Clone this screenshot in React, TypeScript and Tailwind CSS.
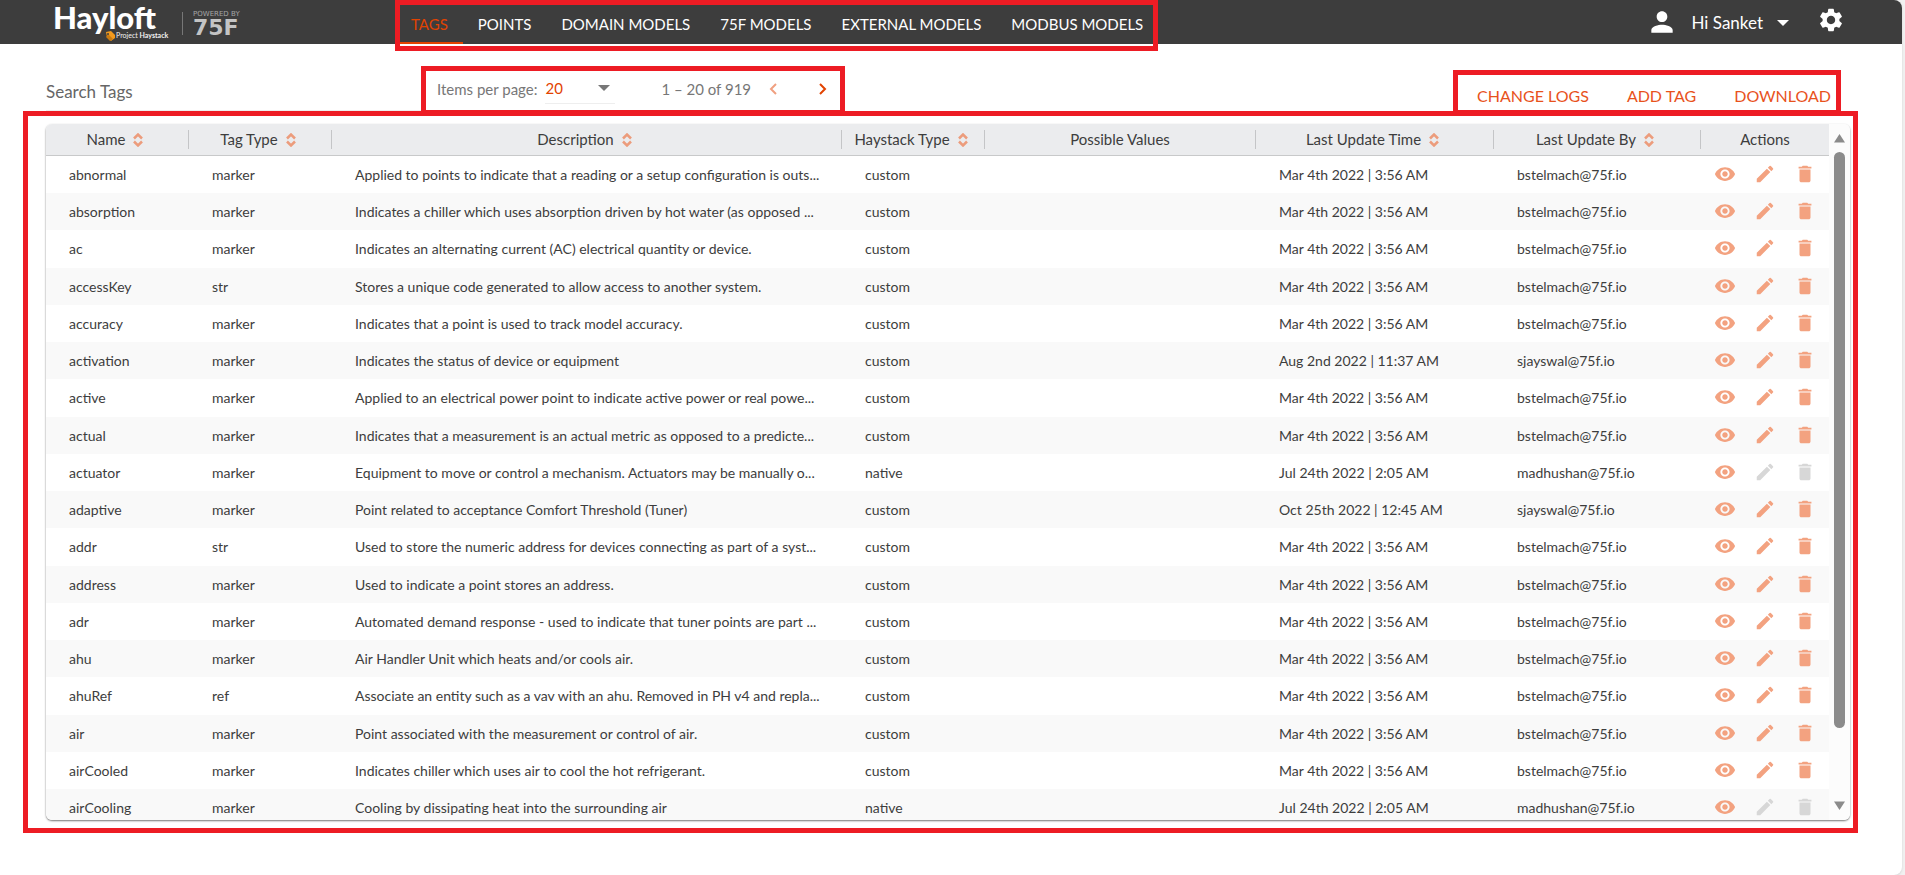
import { FC, ReactNode } from "react";
import { MdDelete, MdEdit, MdPerson, MdSettings, MdVisibility } from "react-icons/md";

interface Tag {
  name: string;
  type: string;
  description: string;
  haystackType: string;
  updatedAt: string;
  updatedBy: string;
}

const MAR = "Mar 4th 2022 | 3:56 AM";
const JUL = "Jul 24th 2022 | 2:05 AM";

const row = (
  name: string,
  type: string,
  description: string,
  haystackType = "custom",
  updatedAt = MAR,
  updatedBy = "bstelmach@75f.io"
): Tag => ({ name, type, description, haystackType, updatedAt, updatedBy });

const tags: Tag[] = [
  row("abnormal", "marker", "Applied to points to indicate that a reading or a setup configuration is outs..."),
  row("absorption", "marker", "Indicates a chiller which uses absorption driven by hot water (as opposed ..."),
  row("ac", "marker", "Indicates an alternating current (AC) electrical quantity or device."),
  row("accessKey", "str", "Stores a unique code generated to allow access to another system."),
  row("accuracy", "marker", "Indicates that a point is used to track model accuracy."),
  row("activation", "marker", "Indicates the status of device or equipment", "custom", "Aug 2nd 2022 | 11:37 AM", "sjayswal@75f.io"),
  row("active", "marker", "Applied to an electrical power point to indicate active power or real powe..."),
  row("actual", "marker", "Indicates that a measurement is an actual metric as opposed to a predicte..."),
  row("actuator", "marker", "Equipment to move or control a mechanism. Actuators may be manually o...", "native", JUL, "madhushan@75f.io"),
  row("adaptive", "marker", "Point related to acceptance Comfort Threshold (Tuner)", "custom", "Oct 25th 2022 | 12:45 AM", "sjayswal@75f.io"),
  row("addr", "str", "Used to store the numeric address for devices connecting as part of a syst..."),
  row("address", "marker", "Used to indicate a point stores an address."),
  row("adr", "marker", "Automated demand response - used to indicate that tuner points are part ..."),
  row("ahu", "marker", "Air Handler Unit which heats and/or cools air."),
  row("ahuRef", "ref", "Associate an entity such as a vav with an ahu. Removed in PH v4 and repla..."),
  row("air", "marker", "Point associated with the measurement or control of air."),
  row("airCooled", "marker", "Indicates chiller which uses air to cool the hot refrigerant."),
  row("airCooling", "marker", "Cooling by dissipating heat into the surrounding air", "native", JUL, "madhushan@75f.io"),
];

const columns = [
  { label: "Name", width: "w-[143px]", sortable: true },
  { label: "Tag Type", width: "w-[143px]", sortable: true },
  { label: "Description", width: "", sortable: true },
  { label: "Haystack Type", width: "w-[143px]", sortable: true },
  { label: "Possible Values", width: "w-[271px]", sortable: false },
  { label: "Last Update Time", width: "w-[238px]", sortable: true },
  { label: "Last Update By", width: "w-[207px]", sortable: true },
  { label: "Actions", width: "w-[128px]", sortable: false },
];

const tabs = ["TAGS", "POINTS", "DOMAIN MODELS", "75F MODELS", "EXTERNAL MODELS", "MODBUS MODELS"];

// red frame laid over a section of the page
const Frame: FC<{ className: string }> = ({ className }) => (
  <div className={`pointer-events-none absolute z-10 border-5 border-[#ed1c24] ${className}`} />
);

const Logo: FC = () => (
  <svg width="200" height="44" viewBox="46 0 200 44" role="img" aria-label="Hayloft">
    <text x="53" y="29" fill="#fff" fontFamily="Lato" fontWeight="900" fontSize="31">
      Hayloft
    </text>
    <path d="M106 32l5-1 4 4v3l-4 3-4-4z" fill="#f39a1d" />
    <path d="M108 34l5 5-3 2-4-4z" fill="#c97a10" />
    <circle cx="108" cy="34" r="1" fill="#3d3d3d" />
    <text x="116" y="38" fill="#f2f2f2" fontFamily="Lato" fontSize="7">
      Project <tspan fontWeight="700">Haystack</tspan>
    </text>
    <path d="M182.500 12v23" stroke="#777" />
    <text x="193" y="16" fill="#a5a5a5" fontFamily="DejaVu Sans" fontSize="7">
      POWERED BY
    </text>
    <text x="193" y="35" fill="#c4c4c4" fontFamily="DejaVu Sans" fontWeight="700" fontSize="22">
      75F
    </text>
  </svg>
);

const SortIcon: FC = () => (
  <svg width="10" height="14" viewBox="0 0 10 14" fill="none" stroke="#ec9c7c" strokeWidth="2.500">
    <path d="M1 5.500l4-4 4 4M1 8.500l4 4 4-4" />
  </svg>
);

const Caret: FC<{ className: string }> = ({ className }) => (
  <svg width="12" height="6" viewBox="0 0 12 6" fill="currentColor" className={className}>
    <path d="M0 0h12L6 6z" />
  </svg>
);

const IconButton: FC<{ label: string; disabled?: boolean; children: ReactNode }> = ({
  label,
  disabled,
  children,
}) => (
  <button aria-label={label} disabled={disabled} className="block text-[#f3a280] disabled:text-[#d7d7d7]">
    {children}
  </button>
);

const Header: FC = () => (
  <header className="flex h-11 items-center bg-[#3d3d3d] pl-[46px] text-white">
    <Logo />
    <nav className="relative ml-[150px] flex h-full">
      {tabs.map((tab, i) => (
        <a
          key={tab}
          href="#"
          className={`flex items-center whitespace-nowrap border-b-2 px-[15px] pt-[6px] text-[15px] leading-5 ${
            i === 0 ? "border-[#e24301] text-[#e24301]" : "border-transparent"
          }`}
        >
          {tab}
        </a>
      ))}
      <Frame className="-bottom-[7px] -left-px right-0 top-0" />
    </nav>
    <div className="ml-auto flex items-center pr-[57px]">
      <MdPerson size={32} />
      <button className="ml-[14px] flex items-center gap-[14px] pt-[2px] text-[17px] leading-6">
        Hi Sanket
        <Caret className="text-white" />
      </button>
      <button aria-label="Settings" className="ml-7 pb-1">
        <MdSettings size={28} />
      </button>
    </div>
  </header>
);

const Toolbar: FC = () => (
  <div className="flex h-[67px] items-end">
    <input
      aria-label="Search Tags"
      placeholder="Search Tags"
      className="h-10 w-[375px] border-b border-[#eee] pt-[2px] text-[17px] text-[#666] outline-none placeholder:text-[#666]"
    />
    <div className="relative flex h-11 w-[424px] items-center whitespace-nowrap pl-4 text-[15px] text-[#777]">
      <label htmlFor="size">Items per page:</label>
      <div className="relative ml-2">
        <select
          id="size"
          defaultValue="20"
          className="h-[30px] w-[70px] appearance-none border-b border-[#eee] text-[#e24301] outline-none"
        >
          <option>20</option>
          <option>50</option>
        </select>
        <Caret className="pointer-events-none absolute right-[5px] top-[11px] text-[#777]" />
      </div>
      <span className="ml-[46px]">1 – 20 of 919</span>
      <button aria-label="Previous page" className="ml-[18px] text-[#f0a080]">
        <svg width="8" height="12" viewBox="0 0 8 12" fill="none" stroke="currentColor" strokeWidth="2">
          <path d="M7 1L2 6l5 5" />
        </svg>
      </button>
      <button aria-label="Next page" className="ml-[42px] text-[#e24301]">
        <svg width="8" height="12" viewBox="0 0 8 12" fill="none" stroke="currentColor" strokeWidth="2">
          <path d="M1 1l5 5-5 5" />
        </svg>
      </button>
      <Frame className="-bottom-1 -top-px left-0 right-0" />
    </div>
    <div className="relative ml-auto mr-[9px] flex h-10 items-center gap-[38px] whitespace-nowrap pl-6 pr-[10px] pt-[10px] text-base text-[#e8521c]">
      <button>CHANGE LOGS</button>
      <button>ADD TAG</button>
      <button>DOWNLOAD</button>
      <Frame className="-bottom-1 -top-px left-0 right-0" />
    </div>
  </div>
);

const TagTable: FC = () => (
  <table className="w-full table-fixed border-separate border-spacing-0 text-left">
    <thead>
      <tr className="bg-[#ebecee]">
        {columns.map((col, i) => (
          <th key={col.label} className={`h-8 border-b border-[#c8c9ca] p-0 font-normal ${col.width}`}>
            <div
              className={`flex h-[19px] items-center justify-center gap-2 whitespace-nowrap text-[15px] ${
                i < columns.length - 1 ? "border-r border-[#c4c5c7]" : ""
              } ${col.sortable ? "pr-1" : ""}`}
            >
              {col.label}
              {col.sortable && <SortIcon />}
            </div>
          </th>
        ))}
      </tr>
    </thead>
    <tbody>
      {tags.map((tag) => {
        const locked = tag.haystackType === "native";
        return (
          <tr key={tag.name} className="h-[37px] text-sm even:bg-[#f9f9f9] nth-[4n+3]:h-[38px]">
            <td className="py-0 pl-[23px]">{tag.name}</td>
            <td className="py-0 pl-[23px]">{tag.type}</td>
            <td className="truncate py-0 pl-[23px]">{tag.description}</td>
            <td className="py-0 pl-[23px]">{tag.haystackType}</td>
            <td />
            <td className="py-0 pl-[23px]">{tag.updatedAt}</td>
            <td className="py-0 pl-[23px]">{tag.updatedBy}</td>
            <td className="py-0 pl-[13px]">
              <div className="flex gap-[18px] pb-[2px]">
                <IconButton label={`View ${tag.name}`}>
                  <MdVisibility size={22} />
                </IconButton>
                <IconButton label={`Edit ${tag.name}`} disabled={locked}>
                  <MdEdit size={22} />
                </IconButton>
                <IconButton label={`Delete ${tag.name}`} disabled={locked}>
                  <MdDelete size={22} />
                </IconButton>
              </div>
            </td>
          </tr>
        );
      })}
    </tbody>
  </table>
);

const ScrollBar: FC = () => (
  <div className="flex w-[21px] flex-col items-center bg-[#fcfcfc] py-[10px] text-[#8b8b8b]">
    <svg width="11" height="9" viewBox="0 0 11 9" fill="currentColor">
      <path d="M5.500 0L11 8.500H0z" />
    </svg>
    <div className="my-[9px] w-[11px] flex-1">
      <div className="h-9/10 rounded-full bg-[#8b8b8b]" />
    </div>
    <svg width="11" height="9" viewBox="0 0 11 9" fill="currentColor">
      <path d="M5.500 9L11 .5H0z" />
    </svg>
  </div>
);

const App: FC = () => {
  return (
    <div className="bg-[#f1f1f1] pr-[3px] font-['Lato',sans-serif] text-[#3d3d3d]">
      <div className="h-screen overflow-hidden rounded-r-lg bg-white shadow">
        <Header />
        <main className="pl-[46px] pr-[52px]">
          <Toolbar />
          <div className="relative mt-[13px]">
            <div className="flex h-[calc(100vh-179px)] overflow-hidden rounded-md shadow-[0_1px_2px_rgba(0,0,0,0.55)]">
              <div className="flex-1 overflow-hidden">
                <TagTable />
              </div>
              <ScrollBar />
            </div>
            <Frame className="-bottom-[13px] -left-[23px] -right-2 -top-[13px]" />
          </div>
        </main>
      </div>
    </div>
  );
};

export default App;
